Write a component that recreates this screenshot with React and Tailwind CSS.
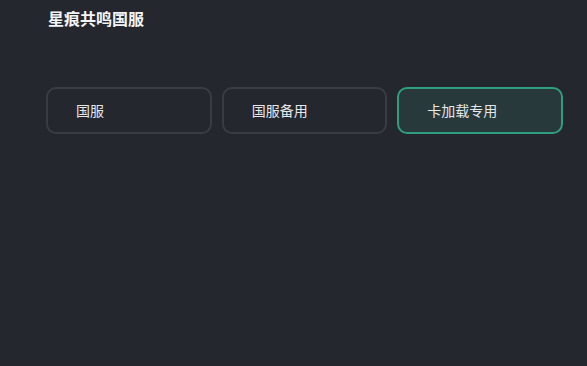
const servers = [
  { name: '国服', active: false },
  { name: '国服备用', active: false },
  { name: '卡加载专用', active: true },
]

export default function App() {
  return (
    <div
      className="w-[587px] h-[366px] bg-[#25272e] text-white pl-[46px] pr-[24px] pt-[7px]"
      style={{ fontFamily: '"Noto Sans CJK SC", "Noto Sans", sans-serif' }}
    >
      <h1 className="text-[16px] font-bold leading-[22px] text-[#f3f4f6] pl-[2px]">星痕共鸣国服</h1>

      <div className="mt-[58px] grid grid-cols-3 gap-[10px]">
        {servers.map((s) => (
          <button
            key={s.name}
            className={`h-[47px] rounded-[10px] border-2 text-left pl-[28px] text-[14px] ${
              s.active
                ? 'border-[#2f9e7f] bg-[#27393a] text-[#e5e7eb]'
                : 'border-[#3a3c44] bg-transparent text-[#e5e7eb]'
            }`}
          >
            {s.name}
          </button>
        ))}
      </div>
    </div>
  )
}
